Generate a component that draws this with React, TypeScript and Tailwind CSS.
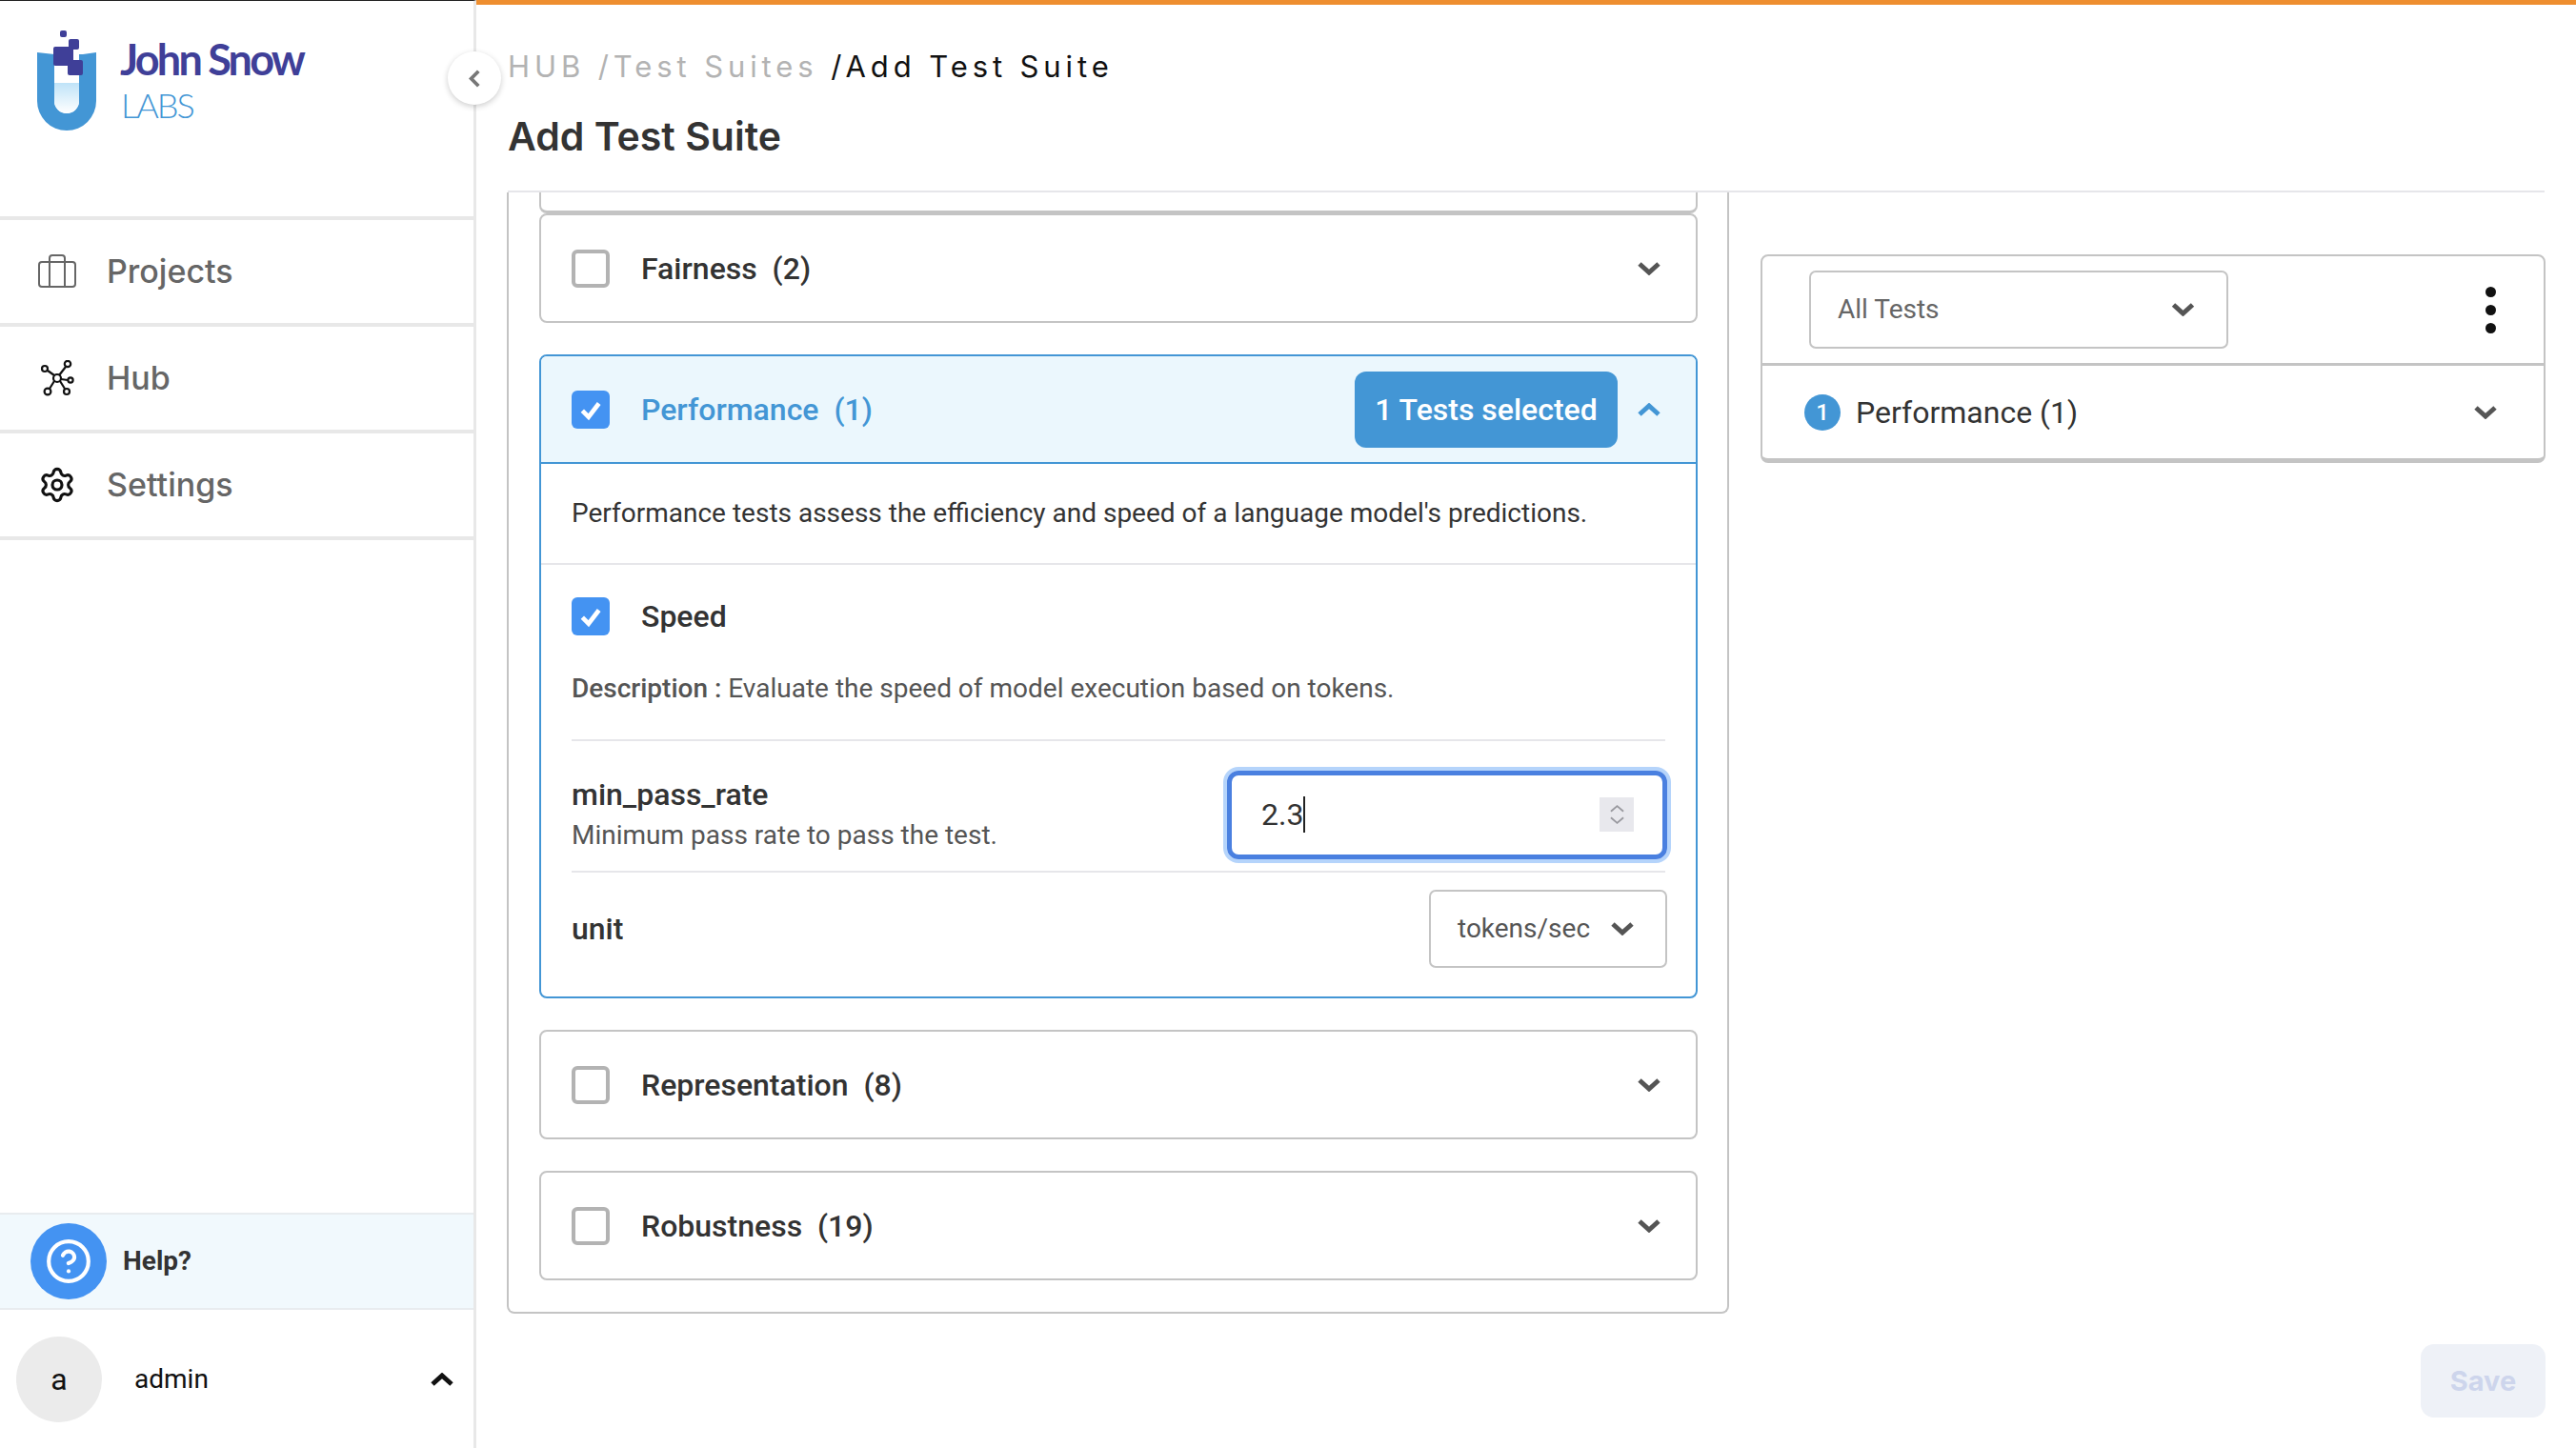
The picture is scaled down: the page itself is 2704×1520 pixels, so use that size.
import { CircleHelp, Settings } from 'lucide-react'

function Chevron({ up = false, className }: { up?: boolean; className: string }) {
  return (
    <svg viewBox="0 0 24 14" fill="none" className={className} stroke="currentColor" strokeWidth="5">
      <polyline points={up ? '2,12 12,3 22,12' : '2,2 12,11 22,2'} />
    </svg>
  )
}

function Checkbox({ checked = false }: { checked?: boolean }) {
  if (checked) {
    return (
      <div className="w-[40px] h-[40px] shrink-0 rounded-[6px] bg-[#4493f2] flex items-center justify-center">
        <svg viewBox="0 0 24 24" fill="none" stroke="white" strokeWidth="4.4" className="w-[26px] h-[26px]">
          <polyline points="4,13 10,19 20,6" />
        </svg>
      </div>
    )
  }
  return <div className="w-[40px] h-[40px] shrink-0 rounded-[6px] border-[4px] border-[#b3b3b3]" />
}

function Logo() {
  return (
    <svg viewBox="0 0 64 108" className="w-[64px] h-[108px] shrink-0">
      <defs>
        <linearGradient id="tube" x1="0" y1="0" x2="0" y2="1">
          <stop offset="0" stopColor="#bfe3f8" />
          <stop offset="1" stopColor="#ffffff" />
        </linearGradient>
      </defs>
      <path d="M1 26 L1 77 A31 31 0 0 0 63 77 L63 26 L49 28 L45 28 L45 77 A13 13 0 0 1 19 77 L19 28 Z" fill="#4396d5" />
      <path d="M19 58 H45 V77 A13 13 0 0 1 19 77 Z" fill="url(#tube)" />
      <rect x="25" y="3" width="7" height="7" rx="2" fill="#3f3f98" />
      <rect x="34" y="12" width="11" height="11" rx="2" fill="#3f3f98" />
      <rect x="18" y="20" width="21" height="20" rx="2" fill="#3f3f98" />
      <rect x="33" y="34" width="16" height="16" rx="2" fill="#3f3f98" />
    </svg>
  )
}

function BriefcaseIcon() {
  return (
    <svg viewBox="0 0 40 36" fill="none" stroke="#666" strokeWidth="2" className="w-[40px] h-[36px]">
      <rect x="1" y="8" width="38" height="26" rx="3" />
      <path d="M12 8V4a3 3 0 0 1 3-3h10a3 3 0 0 1 3 3v4M12 8v26M28 8v26" />
    </svg>
  )
}

function HubIcon() {
  return (
    <svg viewBox="0 0 36 38" fill="none" stroke="#111" strokeWidth="2.2" className="w-[36px] h-[38px]">
      <circle cx="18" cy="19" r="4" />
      <circle cx="5" cy="9" r="3" />
      <circle cx="29" cy="4" r="3.2" />
      <circle cx="32" cy="21" r="2.6" />
      <circle cx="8" cy="33" r="3.4" />
      <circle cx="28" cy="33" r="3" />
      <path d="M8 11l7 5M27 7l-7 9M22 20l7 1M15 22l-5 8M21 22l5 8" />
    </svg>
  )
}

const navItems = [
  { label: 'Projects', icon: <BriefcaseIcon /> },
  { label: 'Hub', icon: <HubIcon /> },
  { label: 'Settings', icon: <Settings className="w-[40px] h-[40px] text-[#111]" strokeWidth={1.9} /> },
]

function Sidebar() {
  return (
    <aside className="relative w-[500px] shrink-0 h-full flex flex-col border-r-[3px] border-[#e8e8e8] border-t-[1px] border-t-[#222]">
      <div className="h-[226px] pl-[38px] pt-[28px] flex items-start gap-[24px]">
        <Logo />
        <div className="flex flex-col pt-[9px]">
          <span className="font-[Lato,sans-serif] font-bold text-[45px] leading-[48px] tracking-[-2.8px] text-[#3f3f98]">John Snow</span>
          <span className="font-[Lato,sans-serif] font-light text-[36px] leading-[48px] tracking-[-2px] text-[#4396d5] pl-[1px]">LABS</span>
        </div>
      </div>
      {/* Collapse toggle */}
      <button className="absolute left-[470px] top-[53px] w-[56px] h-[56px] rounded-full bg-white shadow-[0_2px_6px_rgba(0,0,0,0.2)] flex items-center justify-center z-10">
        <svg viewBox="0 0 14 22" fill="none" stroke="#777" strokeWidth="4.4" className="w-[12px] h-[19px]">
          <polyline points="12,2 3,11 12,20" />
        </svg>
      </button>
      <nav className="border-t-[4px] border-[#e8e8e8]">
        {navItems.map((item) => (
          <div key={item.label} className="h-[112px] border-b-[4px] border-[#e8e8e8] flex items-center">
            <div className="w-[40px] ml-[40px] flex justify-center">{item.icon}</div>
            <span className="ml-[32px] mt-[-1px] font-[Inter,sans-serif] font-medium text-[34px] text-[#666]">{item.label}</span>
          </div>
        ))}
      </nav>
      <div className="flex-1" />
      <div className="h-[102px] bg-[#f1f9fd] border-y-[2px] border-[#e8ecef] flex items-center pl-[32px]">
        <div className="w-[80px] h-[80px] rounded-full bg-[#4493f2] flex items-center justify-center">
          <CircleHelp className="w-[50px] h-[50px] text-white" strokeWidth={2} />
        </div>
        <span className="ml-[17px] font-bold text-[28px] text-[#333]">Help?</span>
      </div>
      <div className="h-[145px] flex items-center pl-[17px] pr-[21px]">
        <div className="w-[90px] h-[90px] rounded-full bg-[#ebebeb] flex items-center justify-center text-[32px] text-[#111]">a</div>
        <span className="ml-[34px] text-[28px] text-[#111]">admin</span>
        <Chevron up className="ml-auto w-[24px] h-[14px] text-[#111]" />
      </div>
    </aside>
  )
}

function Collapsed({ label }: { label: string }) {
  return (
    <div className="h-[115px] rounded-[8px] border-[2px] border-[#c4c4c4] flex items-center pl-[32px] pr-[37px]">
      <Checkbox />
      <span className="ml-[33px] font-medium text-[32px] text-[#333] whitespace-pre">{label}</span>
      <Chevron className="ml-auto w-[24px] h-[14px] text-[#555]" />
    </div>
  )
}

function PerformanceCard() {
  return (
    <div className="rounded-[8px] border-[2px] border-[#4396d5] flex flex-col">
      <div className="h-[113px] bg-[#ebf7fd] rounded-t-[6px] border-b-[2px] border-[#4396d5] flex items-center pl-[32px] pr-[37px]">
        <Checkbox checked />
        <span className="ml-[33px] font-medium text-[32px] text-[#4396d5] whitespace-pre">Performance  (1)</span>
        <div className="ml-auto w-[276px] h-[80px] rounded-[12px] bg-[#4396d5] flex items-center justify-center font-medium text-[32px] text-white">1 Tests selected</div>
        <Chevron up className="ml-[21px] w-[24px] h-[14px] text-[#4396d5]" />
      </div>
      <div className="h-[106px] border-b-[2px] border-[#e6e6ea] flex items-center pl-[32px] text-[28px] text-[#333]">
        Performance tests assess the efficiency and speed of a language model's predictions.
      </div>
      <div className="pl-[32px] pr-[32px]">
        <div className="h-[185px] border-b-[2px] border-[#e6e6ea] pt-[30px]">
          <div className="flex items-center">
            <Checkbox checked />
            <span className="ml-[33px] font-medium text-[32px] text-[#333]">Speed</span>
          </div>
          <p className="mt-[33px] text-[28px] leading-[38px] text-[#555]">
            <span className="font-medium">Description : </span>Evaluate the speed of model execution based on tokens.
          </p>
        </div>
        <div className="h-[138px] pt-[18px] border-b-[2px] border-[#e6e6ea] flex items-center justify-between">
          <div className="flex flex-col">
            <span className="font-medium text-[32px] leading-[40px] text-[#333]">min_pass_rate</span>
            <span className="mt-[4px] text-[28px] leading-[38px] text-[#555]">Minimum pass rate to pass the test.</span>
          </div>
          <div className="w-[462px] h-[93px] mr-[-2px] rounded-[12px] border-[5px] border-[#4a80e0] ring-[4px] ring-[#b5d4fb] flex items-center pl-[31px] pr-[30px]">
            <span className="text-[32px] text-[#333]">2.3</span>
            <span className="w-[2px] h-[38px] bg-[#222]" />
            <div className="ml-auto w-[36px] h-[36px] bg-[#e8e8ed] flex flex-col items-center justify-center gap-[4px]">
              <svg viewBox="0 0 16 9" fill="none" stroke="#99999f" strokeWidth="2" className="w-[15px] h-[9px]"><polyline points="1,8 8,2 15,8" /></svg>
              <svg viewBox="0 0 16 9" fill="none" stroke="#99999f" strokeWidth="2" className="w-[15px] h-[9px]"><polyline points="1,1 8,7 15,1" /></svg>
            </div>
          </div>
        </div>
        <div className="h-[130px] flex items-center justify-between pb-[13px]">
          <span className="font-medium text-[32px] text-[#333]">unit</span>
          <div className="w-[250px] h-[82px] mr-[-2px] rounded-[7px] border-[2px] border-[#c4c4c4] flex items-center pl-[28px] pr-[33px]">
            <span className="text-[28px] text-[#555]">tokens/sec</span>
            <Chevron className="ml-auto w-[24px] h-[14px] text-[#555]" />
          </div>
        </div>
      </div>
    </div>
  )
}

function RightPanel() {
  return (
    <div className="w-[824px] h-[219px] mt-[65px] rounded-[8px] border-[2px] border-b-[5px] border-[#c4c4c4] flex flex-col">
      <div className="h-[115px] border-b-[3px] border-[#c4c4c4] flex items-center pl-[49px] pr-[50px]">
        <div className="w-[440px] h-[82px] rounded-[7px] border-[2px] border-[#c4c4c4] flex items-center pl-[28px] pr-[33px] mt-[-1px]">
          <span className="text-[28px] text-[#666]">All Tests</span>
          <Chevron className="ml-auto w-[25px] h-[14px] text-[#555]" />
        </div>
        <div className="ml-auto flex flex-col gap-[8px]">
          <span className="w-[11px] h-[11px] rounded-full bg-[#111]" />
          <span className="w-[11px] h-[11px] rounded-full bg-[#111]" />
          <span className="w-[11px] h-[11px] rounded-full bg-[#111]" />
        </div>
      </div>
      <div className="flex-1 flex items-center pl-[44px] pr-[49px]">
        <div className="w-[38px] h-[38px] rounded-full bg-[#4396d5] flex items-center justify-center text-[24px] font-medium text-white">1</div>
        <span className="ml-[16px] text-[32px] text-[#333]">Performance (1)</span>
        <Chevron className="ml-auto w-[24px] h-[14px] text-[#555]" />
      </div>
    </div>
  )
}

export default function App() {
  return (
    <div className="w-[2704px] h-[1520px] flex bg-white overflow-hidden font-[Roboto,sans-serif]">
      <Sidebar />
      <main className="flex-1 min-w-0 h-full flex flex-col">
        <div className="h-[5px] bg-[#ee8e2f]" />
        <header className="h-[197px] mx-[33px] border-b-[2px] border-[#e6e6ea] flex flex-col">
          <div className="mt-[47px] font-[Inter,sans-serif] text-[31px] leading-[36px] tracking-[4.9px] text-[#b3b3b3] whitespace-pre">
            HUB /Test Suites <span className="text-[#111]">/Add Test Suite</span>
          </div>
          <h1 className="mt-[32px] font-[Inter,sans-serif] font-semibold text-[41px] leading-[46px] text-[#333]">Add Test Suite</h1>
        </header>
        <div className="flex pl-[32px] gap-[33px]">
          <section className="w-[1283px] shrink-0 border-x-[2px] border-b-[2px] border-[#c4c4c4] rounded-b-[8px] pl-[32px] pr-[31px] pb-[33px] flex flex-col">
            <div className="h-[22px] border-x-[2px] border-b-[3px] border-[#c4c4c4] rounded-b-[8px]" />
            <div className="flex flex-col gap-[33px]">
              <Collapsed label="Fairness  (2)" />
              <PerformanceCard />
              <Collapsed label="Representation  (8)" />
              <Collapsed label="Robustness  (19)" />
            </div>
          </section>
          <RightPanel />
        </div>
        <div className="flex justify-end pr-[32px] mt-[32px]">
          <button className="w-[131px] h-[77px] rounded-[14px] bg-[#eef1f7] font-[Inter,sans-serif] text-[29px] font-bold text-[#cdd5ec]">Save</button>
        </div>
      </main>
    </div>
  )
}
